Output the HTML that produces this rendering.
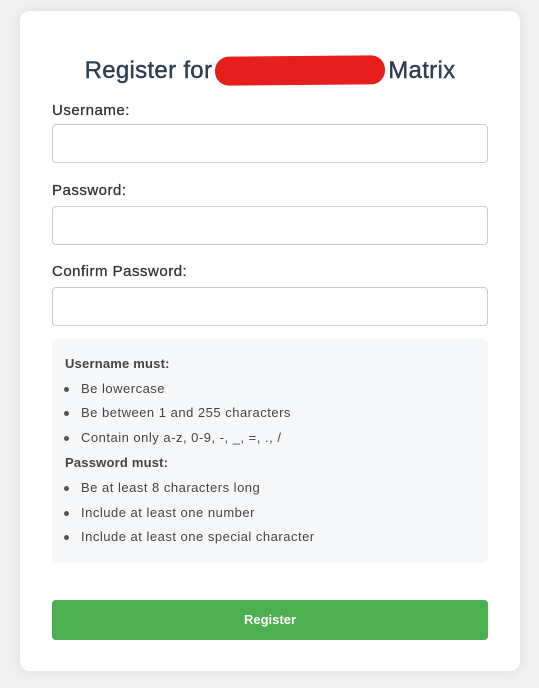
<!DOCTYPE html>
<html><head><style>
body{margin:0;background:#f0f0f0;font-family:"Liberation Sans",sans-serif;width:539px;height:688px;position:relative;overflow:hidden}
.card{position:absolute;left:20px;top:11px;width:500px;height:660px;background:#fff;border-radius:10px;box-shadow:0 0 12px rgba(0,0,0,.08)}
h1{position:absolute;left:0;right:0;top:45px;margin:0;text-align:center;font-size:24px;font-weight:normal;color:#2c3e50;letter-spacing:.3px;-webkit-text-stroke:.4px #2c3e50}
.blob{display:inline-block;width:170px;height:29px;background:#e61e1e;border-radius:14px;vertical-align:-7px;margin:0 3px;transform:rotate(-.5deg)}
label{position:absolute;left:32px;font-size:15px;color:#333;letter-spacing:.5px;-webkit-text-stroke:.3px #333}
.in{position:absolute;left:32px;width:434px;height:37px;border:1px solid #ccc;border-radius:4px}
.info{position:absolute;left:32px;top:328px;width:436px;height:224px;background:#f6f7f9;border-radius:5px;font-size:13px;color:#444;letter-spacing:.5px}
.info div{position:absolute;left:13px;white-space:nowrap}
.b{font-weight:bold;letter-spacing:.2px}
.li{left:29px!important}
.li:before{content:"";position:absolute;left:-17px;top:6px;width:5px;height:5px;border-radius:50%;background:#555}
.btn{position:absolute;left:32px;top:589px;width:436px;height:40px;background:#4caf50;border-radius:4px;color:#fff;font-weight:bold;font-size:13px;text-align:center;line-height:40px}
</style></head><body>
<div class="card">
<h1>Register for<span class="blob"></span>Matrix</h1>
<label style="top:91px">Username:</label>
<div class="in" style="top:113px"></div>
<label style="top:171px">Password:</label>
<div class="in" style="top:195px"></div>
<label style="top:252px">Confirm Password:</label>
<div class="in" style="top:276px"></div>
<div class="info">
<div class="b" style="top:17px">Username must:</div>
<div class="li" style="top:42px">Be lowercase</div>
<div class="li" style="top:66px">Be between 1 and 255 characters</div>
<div class="li" style="top:91px">Contain only a-z, 0-9, -, _, =, ., /</div>
<div class="b" style="top:116px">Password must:</div>
<div class="li" style="top:141px">Be at least 8 characters long</div>
<div class="li" style="top:166px">Include at least one number</div>
<div class="li" style="top:190px">Include at least one special character</div>
</div>
<div class="btn">Register</div>
</div>
</body></html>
